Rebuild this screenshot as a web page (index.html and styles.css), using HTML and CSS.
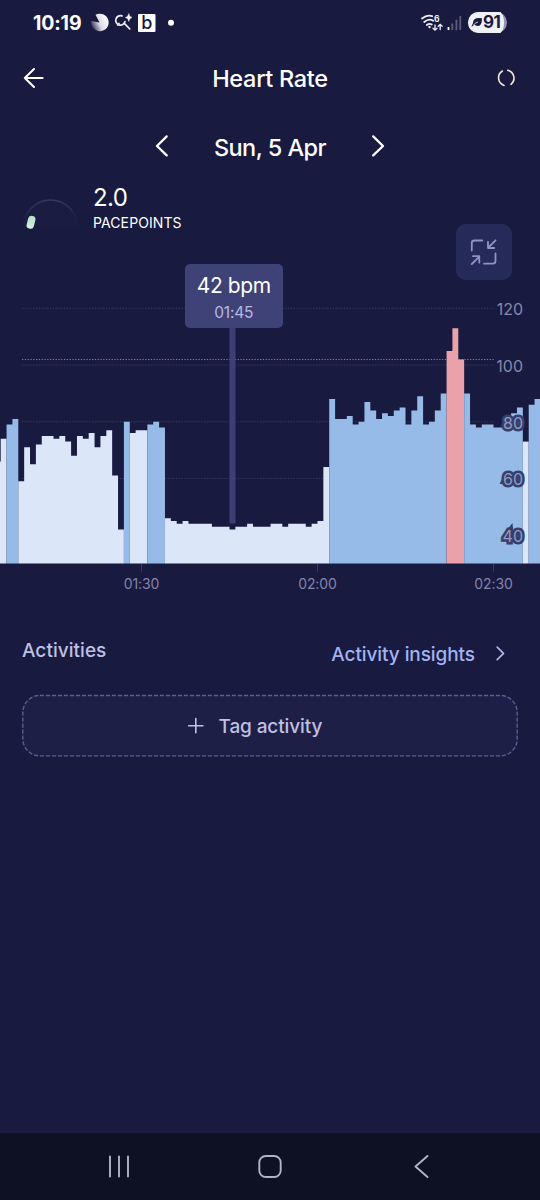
FILE: index.html
```html
<!DOCTYPE html>
<html lang="en">
<head>
<meta charset="utf-8">
<title>Heart Rate</title>
<link rel="stylesheet" href="styles.css">
</head>
<body>
<div class="screen">
  <div class="status">
    <span class="clock">10:19</span>
    <svg class="status-left" width="86" height="24" viewBox="90 10 86 24">
      <defs><linearGradient id="pie" x1="0.9" y1="0.2" x2="0" y2="0.6"><stop offset="0" stop-color="#fff"/><stop offset=".55" stop-color="#dcdce8"/><stop offset="1" stop-color="#3a3a5c"/></linearGradient></defs>
      <path d="M99.5 22.5 95.5 14.8A8.8 8.8 0 1 1 91.2 21Z" fill="url(#pie)"/>
      <g fill="none" stroke="#eeeefa" stroke-width="1.7" stroke-linecap="round">
        <path d="M122 15.9A4.7 4.7 0 1 0 125 21.5M124.8 23.8 129.8 29M117.8 25 119 23.4"/>
      </g>
      <path d="M128.8 13.6Q129.3 17 132 17.5 129.3 18 128.8 21.4 128.3 18 125.4 17.5 128.3 17 128.8 13.6Z" fill="#fff" stroke="#fff" stroke-width=".5"/>
      <rect x="138" y="14" width="17.5" height="18" rx="1" fill="#fff"/>
      <text x="146.8" y="28.5" text-anchor="middle" class="badge-letter">b</text>
      <circle cx="171" cy="22.7" r="3" fill="#fff"/>
    </svg>
    <svg class="status-right" width="90" height="24" viewBox="420 10 90 24">
      <g fill="none" stroke="#eeeef8" stroke-width="1.8" stroke-linecap="round">
        <path d="M422 18.5Q427 14.4 432.2 16.2M424.2 22Q429 18 433.2 20.8M426.8 25Q429.5 23 431.8 24.6"/>
        <path d="M435 25V30M433 28.3 435 30.2 437 28.3M440.2 29.5V24.8M438.2 26.3 440.2 24.4 442.2 26.3" stroke-width="1.3"/>
      </g>
      <circle cx="429.5" cy="27" r="1.2" fill="#eeeef8"/>
      <text x="434" y="21.8" class="wifi-gen">6</text>
      <g stroke-width="1.8"><path d="M448.5 27V30" stroke="#fff"/><path d="M452.3 23.5V30M456.4 19.7V30M460.3 16V30" stroke="#5c5d7b"/></g>
      <rect x="468" y="12" width="39" height="21" rx="10.5" fill="#9596ac"/>
      <path d="M478.5 12H500.5Q504 15.5 504 22.5T500.5 33H478.5A10.5 10.5 0 0 1 478.5 12Z" fill="#f0f0f8"/>
      <path d="M482 18.3Q473 17 473 23L471.3 26.9 474.5 24.8Q482 29 482 18.3Z" fill="#191a3f"/>
      <path d="M473 25.5Q475.5 22.5 478 22" fill="none" stroke="#f0f0f8" stroke-width=".8"/>
      <text x="483" y="28" class="battery">91</text>
    </svg>
  </div>

  <header class="header">
    <svg width="24" height="24" viewBox="22 66 24 24" class="line"><path d="M42.6 78H24.8M34 69 24.8 78 34 87" stroke-width="2"/></svg>
    <h1 class="title">Heart Rate</h1>
    <svg width="24" height="24" viewBox="494 66 24 24" class="line"><path d="M502.4 71A8 8 0 0 0 504 85.4M507.8 70.3A8 8 0 0 1 511 84.3" stroke="#efe3d6" stroke-width="1.6"/></svg>
  </header>

  <div class="date-row">
    <svg width="18" height="28" viewBox="153 132 18 28" class="line"><path d="M166.7 136.4 157 146 166.7 155.4" stroke-width="2.3"/></svg>
    <span class="date">Sun, 5 Apr</span>
    <svg width="18" height="28" viewBox="369 132 18 28" class="line"><path d="M373.2 136.4 383 146 373.2 155.4" stroke-width="2.3"/></svg>
  </div>

  <div class="points-row">
    <svg width="57" height="32" viewBox="22 198 57 32">
      <defs><linearGradient id="dome" x1="0" y1="0" x2="0" y2="1"><stop offset="0" stop-color="#37385e"/><stop offset=".6" stop-color="#20214a"/><stop offset="1" stop-color="#191a3f"/></linearGradient>
      <linearGradient id="mint" x1="0" y1="0" x2="0" y2="1"><stop offset="0" stop-color="#b8dcc9"/><stop offset="1" stop-color="#d5f1df"/></linearGradient></defs>
      <path d="M23.5 227A27 27 0 0 1 77.5 227" fill="#1b1c42" stroke="url(#dome)" stroke-width="1.6"/>
      <rect x="27.3" y="215.8" width="7.4" height="13" rx="3.4" fill="url(#mint)" transform="rotate(14 31 222.3)"/>
    </svg>
    <div class="points">
      <span class="points-value">2.0</span>
      <span class="points-label">PACEPOINTS</span>
    </div>
  </div>

  <section class="chart">
    <svg id="chart" width="540" height="340" viewBox="0 260 540 340"></svg>
    <div class="tooltip"><span class="bpm">42 bpm</span><span class="time">01:45</span></div>
    <button class="shrink">
      <svg width="28" height="28" viewBox="470 238 28 28" class="line"><path d="M471.8 250.5V243Q471.8 240.5 474.3 240.5H482.3M495.5 253.5V261Q495.5 263.7 493 263.7H484M495.5 240.3 488.2 247.7M488 241.8V248H494.2M471.8 264 479 256.8M473 256.2H479.3V262.5" stroke="#8e93c8" stroke-width="1.8"/></svg>
    </button>
  </section>

  <div class="activities">
    <h2 class="section-title">Activities</h2>
    <a class="insights"><span class="insights-text">Activity insights</span>
      <svg width="12" height="18" viewBox="494 645 12 18" class="line"><path d="M497.2 647.2 503.5 653.4 497.2 659.7" stroke="#aab8f0" stroke-width="1.7"/></svg></a>
  </div>
  <div class="tag">
    <svg class="tag-border" width="496" height="62" viewBox="0 0 496 62"><rect x=".8" y=".5" width="494.4" height="60.4" rx="17" fill="#1e1f46" stroke="#5c5d90" stroke-width="1.4" stroke-dasharray="4.2 1.8"/></svg>
    <svg width="16" height="16" viewBox="0 0 16 16" class="line"><path d="M7.8 .6V14.8M.7 7.7H14.9" stroke="#c0c1e8" stroke-width="1.6"/></svg>
    <span class="tag-text">Tag activity</span>
  </div>

  <nav class="nav">
    <svg width="540" height="67" viewBox="0 1133 540 67"><g fill="none" stroke="#b2b4c6" stroke-width="1.9" stroke-linecap="round"><path d="M110 1156.5V1176.5M119 1156.5V1176.5M128 1156.5V1176.5"/><rect x="259.3" y="1156" width="21.4" height="21" rx="6.5"/><path d="M427.5 1156 415.5 1166.5 427.5 1177" stroke-linejoin="round"/></g></svg>
  </nav>
</div>
<script src="chart.js"></script>
</body>
</html>
```
FILE: styles.css
```css
* { box-sizing: border-box; }
body { margin: 0; background: #191a3f; }
.screen { width: 540px; height: 1200px; display: flex; flex-direction: column; background: #191a3f; color: #fff; font-family: Inter, "Liberation Sans", sans-serif; overflow: hidden; }
svg { display: block; flex: none; overflow: visible; }
.line { fill: none; stroke: #fff; stroke-linecap: round; stroke-linejoin: round; }
.status { height: 44px; display: flex; align-items: center; padding: 0 30px 0 33px; }
.clock { font-size: 19.5px; font-weight: 650; width: 57px; white-space: nowrap; letter-spacing: -.15px; padding-top: 1px; }
.status-right { margin-left: auto; }
.badge-letter { font: 500 18px Inter, sans-serif; fill: #191a3f; }
.wifi-gen { font: 700 8.5px Inter, sans-serif; fill: #eeeef8; }
.battery { font: 700 17px Inter, sans-serif; fill: #191a3f; letter-spacing: -.6px; }
.header { height: 68px; display: flex; align-items: center; justify-content: space-between; padding: 0 22px; }
.title { margin: 0; font-size: 23.5px; font-weight: 550; letter-spacing: -.3px; }
.date-row { height: 68px; display: flex; align-items: center; justify-content: space-between; padding: 0 153px; }
.date { font-size: 23.5px; font-weight: 550; margin-top: 2px; letter-spacing: -.55px; }
.points-row { height: 80px; display: flex; align-items: flex-start; gap: 14px; padding: 5px 22px; }
.points-row > svg { margin-top: 13px; }
.points { display: flex; flex-direction: column; }
.points-value { font-size: 24px; line-height: 26px; letter-spacing: -.6px; }
.points-label { font-size: 14px; line-height: 20px; margin-top: 2px; letter-spacing: .1px; }
.chart { position: relative; height: 340px; }
.tooltip { position: absolute; left: 184.5px; top: 3.5px; width: 98.5px; height: 64.5px; border-radius: 5px; background: #3e4277; display: flex; flex-direction: column; align-items: center; }
.bpm { font-size: 21px; line-height: 25px; margin-top: 9px; letter-spacing: -.4px; }
.time { font-size: 15.5px; line-height: 20px; margin-top: 5px; color: #b8b9e3; letter-spacing: -.2px; }
.shrink { position: absolute; left: 456px; top: -36px; width: 56px; height: 56px; border: 0; border-radius: 10px; background: #252a58; display: grid; place-items: center; padding: 0; }
.grid-line { stroke: #3a3b60; stroke-width: 1; stroke-dasharray: 1.3 1.5; }
.limit-line { stroke: #a86a78; stroke-width: 1.2; stroke-dasharray: 1.3 1.5; }
.tick { stroke: #3a3b61; stroke-width: 1; }
.cursor { fill: #403f74; }
.axis-x { font: 400 14px Inter, sans-serif; fill: #8384aa; text-anchor: middle; letter-spacing: -.1px; }
.axis-y { font: 400 16px Inter, sans-serif; fill: #8788ad; text-anchor: end; }
.on-bars { stroke: #35406f; stroke-width: 5px; paint-order: stroke; stroke-linejoin: miter; stroke-miterlimit: 10; fill: #9698bd; }
.halo-tip { fill: #35406f; }
.activities { height: 95px; display: flex; justify-content: space-between; padding: 39px 34px 0 22px; }
.section-title { margin: 0; font-size: 19px; line-height: 24px; font-weight: 500; letter-spacing: .05px; color: #bfc0e0; }
.insights { display: flex; align-items: center; gap: 19px; height: 30px; color: #a1b2f2; }
.insights-text { font-size: 19px; font-weight: 500; letter-spacing: -.08px; }
.tag { position: relative; height: 62px; margin: 0 22px; display: flex; align-items: center; gap: 14.5px; padding-left: 166px; color: #bfc0e0; }
.tag-border { position: absolute; inset: 0; }
.tag > .line { position: relative; }
.tag-text { position: relative; font-size: 19px; font-weight: 500; letter-spacing: -.12px; }
.nav { margin-top: auto; height: 67px; background: #0e1024; }
```
FILE: chart.js
```javascript
// One bar per minute, starting at 01:05. Suffix: b = elevated, r = above limit.
const readings = `66 74 79b 81b 59 71 65 72 75 75 74 75 73 68 75 74 76 71 75 77 61 42
80b 76 77 77 79b 80b 78b 46 45 44 45 44 44 44 44 43 43 43 42 43 43 44 43 43 43 44 44
43 44 44 44 43 44 45 64 88b 81b 81b 82b 79b 80b 87b 84b 81b 83b 82b 84b 85b 79b 84b
89b 79b 80b 84b 90b 105r 113r 102r 90b 79b 78b 79b 79b 78b 78b 78b 83b 85b 73 86b 88b`.split(/\s+/);
const chart = document.getElementById('chart');
const minute = 176 / 30, halfHour = 141.5;
const yOf = bpm => 563.5 - (bpm - 30) * 2.835;
const colors = { n: '#dbe6f9', b: '#96bbe8', r: '#eaa1a9' };

function add(tag, attrs, text) {
  const el = document.createElementNS('http://www.w3.org/2000/svg', tag);
  for (const key in attrs) el.setAttribute(key, attrs[key]);
  if (text) el.textContent = text;
  chart.append(el);
}

for (const bpm of [120, 100, 80, 60]) {
  add('line', { x1: 22, x2: 494, y1: yOf(bpm), y2: yOf(bpm), class: 'grid-line' });
}
add('line', { x1: 22, x2: 494, y1: 359.5, y2: 359.5, class: 'limit-line' });

// Neighbouring bars of one zone share a single outline.
const runs = [];
readings.forEach((entry, i) => {
  const zone = /[br]$/.test(entry) ? entry.slice(-1) : 'n';
  const x = halfHour + (i - 25) * minute;
  let run = runs[runs.length - 1];
  if (!run || run.zone !== zone) {
    run = { zone, d: `M${x} ${yOf(30)}` };
    runs.push(run);
  }
  run.d += `V${yOf(parseInt(entry, 10))}H${x + minute}`;
});
for (const run of runs) add('path', { d: `${run.d}V${yOf(30)}Z`, fill: colors[run.zone] });

add('rect', { x: 229.5, y: 326, width: 6, height: 197.5, class: 'cursor' });
[['01:30', 0], ['02:00', 30], ['02:30', 60]].forEach(([label, m]) => {
  const x = halfHour + m * minute;
  add('line', { x1: x, x2: x, y1: 564, y2: 571.5, class: 'tick' });
  add('text', { x, y: 589, class: 'axis-x' }, label);
});

// Pointed corners of the label halos at 60 and 40.
add('path', { d: 'M499.5 484 505 473 508 484ZM505 532 512.5 523 513.5 534Z', class: 'halo-tip' });
for (const bpm of [120, 100, 80, 60, 40]) {
  add('text', { x: 523, y: yOf(bpm) + 7, class: bpm < 100 ? 'axis-y on-bars' : 'axis-y' }, String(bpm));
}
```
